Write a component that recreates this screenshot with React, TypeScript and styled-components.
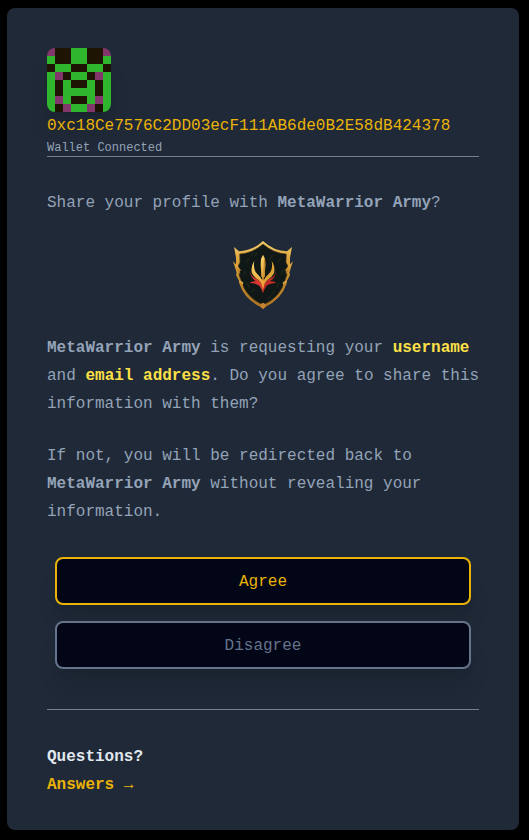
import React from "react";
import styled, { createGlobalStyle } from "styled-components";

const GlobalStyle = createGlobalStyle`
  *, *::before, *::after { box-sizing: border-box; }
  body {
    margin: 0;
    background: #000;
    color: #94a3b8;
    font: 16px/28px "Liberation Mono", monospace;
  }
`;

const Page = styled.div`
  padding: 8px 10px 10px 7px;
`;

const Card = styled.main`
  max-width: 512px;
  margin: 0 auto;
  padding: 40px 40px 31px;
  border-radius: 8px;
  background: #1f2937;
`;

const Account = styled.header`
  border-bottom: 1px solid #75808c;
`;

const Avatar = styled.svg`
  display: block;
  width: 64px;
  height: 64px;
  border-radius: 8px;
  box-shadow: 0 20px 25px -5px rgba(0, 0, 0, 0.1), 0 8px 10px -6px rgba(0, 0, 0, 0.1);
`;

const Address = styled.p`
  margin: 0;
  color: #eab308;
  overflow-wrap: anywhere;
`;

const Status = styled.p`
  margin: 0;
  font-size: 12px;
  line-height: 16px;
`;

const Paragraph = styled.p`
  margin: 24px -4px 0 0;
`;

const Question = styled(Paragraph)`
  margin: 32px 0 23px;
`;

const Highlight = styled.strong`
  color: #fde047;
`;

const Logo = styled.svg`
  display: block;
  width: 64px;
  height: 70px;
  margin: 0 auto;
`;

const Actions = styled.div`
  display: flex;
  flex-direction: column;
  gap: 16px;
  padding: 31px 8px 40px;
`;

const Button = styled.button<{ $tone: "primary" | "muted" }>`
  height: 48px;
  padding: 2px 8px 0;
  border: 2px solid ${(p) => (p.$tone === "primary" ? "#eab308" : "#64748b")};
  border-radius: 8px;
  background: #020617;
  color: ${(p) => (p.$tone === "primary" ? "#eab308" : "#64748b")};
  font: inherit;
  line-height: 24px;
  cursor: pointer;
  box-shadow: 0 20px 25px -5px rgba(0, 0, 0, 0.1), 0 8px 10px -6px rgba(0, 0, 0, 0.1);
`;

const Help = styled.footer`
  padding-top: 33px;
  border-top: 1px solid #75808c;
  font-weight: 700;
`;

const HelpTitle = styled.p`
  margin: 0;
  color: #e2e8f0;
`;

const HelpLink = styled.a`
  color: #eab308;
  text-decoration: none;
`;

const cells = [
  "PBBGGBBP",
  "GBBGGBBG",
  "BGGBBGGB",
  "GPBGGBPG",
  "GBGBBGBG",
  "GBGGGGBG",
  "GPGBBGPG",
  "GBPGGPBG",
];
const cellColors: Record<string, string> = { P: "#83366c", B: "#1e1404", G: "#30b52f" };

function Identicon() {
  return (
    <Avatar viewBox="0 0 8 8" shapeRendering="crispEdges" role="img" aria-label="Wallet avatar">
      {cells.map((row, y) =>
        row.split("").map((c, x) => (
          <rect key={`${x}-${y}`} x={x} y={y} width="1" height="1" fill={cellColors[c]} />
        ))
      )}
    </Avatar>
  );
}

const redWing =
  "M75 108 Q78 124 90 129 Q106 136 114 152 L114 175 Q110 160 103 152 Q92 144 74 144 Q82 137 93 139 Q76 129 75 108Z";
const goldProng =
  "M88 77 Q84 98 92 111 Q98 119 105 125 Q112 132 114 144 L114 164 Q111 144 101 135 Q86 126 81 115 Q76 96 88 77Z";

function ShieldLogo() {
  return (
    <Logo viewBox="18 15 192 210" role="img" aria-label="MetaWarrior Army">
      <defs>
        <linearGradient id="rim" x1="0" y1="0" x2="0" y2="1">
          <stop offset="0" stopColor="#f5d06c" />
          <stop offset="0.3" stopColor="#d9a03a" />
          <stop offset="0.7" stopColor="#c08628" />
          <stop offset="1" stopColor="#a87024" />
        </linearGradient>
        <linearGradient id="flame" x1="0" y1="0" x2="0" y2="1">
          <stop offset="0" stopColor="#ffdc72" />
          <stop offset="1" stopColor="#dd982c" />
        </linearGradient>
      </defs>
      <path
        d="M114 18 Q146 48 186 49 L201 36 L195 68 L195 88 L204 79 L193 113 L195 120 L186 137 L184 148 Q170 192 121 216 L114 222 L107 216 Q58 192 44 148 L42 137 L33 120 L35 113 L24 79 L33 88 L33 68 L27 36 L42 49 Q82 48 114 18Z"
        fill="url(#rim)"
      />
      <path
        d="M114 27 Q146 55 184 57 L183 82 L189 94 L184 108 L186 120 L180 136 Q167 187 114 210 Q61 187 48 136 L42 120 L44 108 L39 94 L45 82 L44 57 Q82 55 114 27Z"
        fill="#0f1816" stroke="#5a4219" strokeWidth="2"
      />
      <g fill="url(#rim)">
        <path d="M33 88 L50 108 L44 106 L46 116 L37 108Z M195 88 L178 108 L184 106 L182 116 L191 108Z" />
        <path d="M42 137 L55 142 L53 154 L46 150Z M186 137 L173 142 L175 154 L182 150Z" />
      </g>
      <g stroke="#37361f" strokeWidth="2" fill="none">
        <path d="M62 82l10-12M78 64l7-10M143 60l-9 16M169 68l-10 13M56 119l6-12M66 145l8 12M79 171l10-8M141 175l10-9M168 118l6-12M130 191l8-10M96 52l-7 13M154 157l8-13" />
      </g>
      <path d={redWing} fill="#d63830" />
      <path d={redWing} fill="#c22b28" transform="translate(228 0) scale(-1 1)" />
      <path d={goldProng} fill="url(#flame)" />
      <path d={goldProng} fill="#dda336" transform="translate(228 0) scale(-1 1)" />
      <path d="M114 59 L108 72 L107 88 L109 124 L114 132 L119 124 L121 88 L120 72Z" fill="url(#flame)" />
      <path d="M117 66 L120 73 L121 88 L119 124 L115 130Z" fill="#c58a2b" />
      <path d="M114 124 L118 142 L114 163 L110 142Z" fill="#eda33a" />
      <path d="M106 208 L114 203 L122 208 L121 216 L114 222 L107 216Z" fill="#c58430" />
    </Logo>
  );
}

export default function App() {
  return (
    <Page>
      <GlobalStyle />
      <Card>
        <Account>
          <Identicon />
          <Address>0xc18Ce7576C2DD03ecF111AB6de0B2E58dB424378</Address>
          <Status>Wallet Connected</Status>
        </Account>
        <Question>
          Share your profile with <strong>MetaWarrior Army</strong>?
        </Question>
        <ShieldLogo />
        <Paragraph>
          <strong>MetaWarrior Army</strong> is requesting your <Highlight>username</Highlight> and{" "}
          <Highlight>email address</Highlight>. Do you agree to share this information with them?
        </Paragraph>
        <Paragraph>
          If not, you will be redirected back to <strong>MetaWarrior Army</strong> without revealing
          your information.
        </Paragraph>
        <Actions>
          <Button type="button" $tone="primary">Agree</Button>
          <Button type="button" $tone="muted">Disagree</Button>
        </Actions>
        <Help>
          <HelpTitle>Questions?</HelpTitle>
          <HelpLink href="#answers">Answers →</HelpLink>
        </Help>
      </Card>
    </Page>
  );
}
